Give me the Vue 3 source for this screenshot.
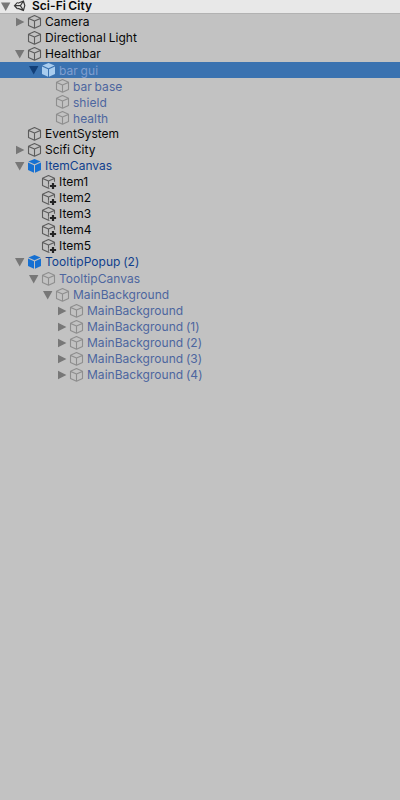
<script setup>
const rows = [
  { label: 'Camera', depth: 1, arrow: 'right' },
  { label: 'Directional Light', depth: 1 },
  { label: 'Healthbar', depth: 1, arrow: 'down' },
  { label: 'bar gui', depth: 2, arrow: 'down', kind: 'selected' },
  { label: 'bar base', depth: 3, kind: 'muted', low: true },
  { label: 'shield', depth: 3, kind: 'muted', low: true },
  { label: 'health', depth: 3, kind: 'muted', low: true },
  { label: 'EventSystem', depth: 1 },
  { label: 'Scifi City', depth: 1, arrow: 'right' },
  { label: 'ItemCanvas', depth: 1, arrow: 'down', kind: 'prefab' },
  { label: 'Item1', depth: 2, added: true },
  { label: 'Item2', depth: 2, added: true },
  { label: 'Item3', depth: 2, added: true },
  { label: 'Item4', depth: 2, added: true },
  { label: 'Item5', depth: 2, added: true },
  { label: 'TooltipPopup (2)', depth: 1, arrow: 'down', kind: 'prefab' },
  { label: 'TooltipCanvas', depth: 2, arrow: 'down', kind: 'muted', gap: true },
  { label: 'MainBackground', depth: 3, arrow: 'down', kind: 'muted' },
  { label: 'MainBackground', depth: 4, arrow: 'right', kind: 'muted' },
  { label: 'MainBackground (1)', depth: 4, arrow: 'right', kind: 'muted' },
  { label: 'MainBackground (2)', depth: 4, arrow: 'right', kind: 'muted' },
  { label: 'MainBackground (3)', depth: 4, arrow: 'right', kind: 'muted' },
  { label: 'MainBackground (4)', depth: 4, arrow: 'right', kind: 'muted' },
]
const solid = (row) => row.kind === 'prefab' || row.kind === 'selected'
</script>

<template>
  <main class="hierarchy">
    <header class="scene">
      <svg class="arrow" viewBox="0 0 12 13"><path d="M1 2.6H10.4L5.7 11Z" /></svg>
      <svg class="logo" viewBox="0 0 14 13">
        <path d="M5 3.2 10.4 1 11.8 5.6 10.4 10.4 5 8.4M4.6 2.4 1.5 5.7 4.6 9M1.6 5.7H7.4M7.4 5.7 10.2 1.3M7.4 5.7 10.2 10.1" />
      </svg>
      <span class="label">Sci-Fi City</span>
    </header>
    <ul class="tree">
      <li
        v-for="(row, i) in rows"
        :key="i"
        class="row"
        :class="[row.kind, 'depth-' + row.depth, { gap: row.gap, low: row.low }]"
      >
        <svg class="arrow" viewBox="0 0 12 16">
          <path v-if="row.arrow === 'down'" d="M1 4H10.4L5.7 12.4Z" />
          <path v-else-if="row.arrow === 'right'" d="M2 3.8V12.2L10.4 8Z" />
        </svg>
        <svg class="cube" viewBox="0 0 16 16">
          <template v-if="solid(row)">
            <path class="face" d="M7.5 1.1 13.6 3.5 7.5 6.2 1.4 3.5Z" />
            <path class="face" d="M1 4.6 7 7.2V14.7L1 11.9Z" />
            <path class="face" d="M14 4.6 8 7.2V14.7L14 11.9Z" />
          </template>
          <path v-else class="wire" d="M7.5 1.6 13.5 4.3V11.4L7.5 14.3 1.5 11.4V4.3ZM1.7 4.4 7.5 7.1 13.3 4.4M7.5 7.1V14" />
          <template v-if="row.added">
            <path class="halo" d="M12 7.8V16M7.8 12H16" />
            <path class="plus" d="M12 8.9V15.1M8.9 12H15.1" />
          </template>
        </svg>
        <span class="label">{{ row.label }}</span>
      </li>
    </ul>
  </main>
</template>

<style>
body {
  background: #c2c2c2;
}
</style>

<style scoped>
.hierarchy {
  min-height: 800px;
  background: #c2c2c2;
  color: #080808;
  font: 12px/16px Inter, sans-serif;
  letter-spacing: 0.03px;
  word-spacing: -0.6px;
  overflow: hidden;
}
.scene {
  box-sizing: border-box;
  height: 14px;
  display: flex;
  align-items: flex-start;
  background: #e8e8e8;
  border-bottom: 1px solid #b2b2b2;
  font-weight: 600;
  line-height: 12px;
}
.scene .arrow {
  height: 13px;
  margin-right: 1px;
}
.logo {
  width: 14px;
  height: 13px;
  margin-right: 5px;
  flex: none;
  fill: none;
  stroke: #383838;
  stroke-width: 1.2;
}
.tree {
  list-style: none;
  margin: 0;
  padding: 0;
}
.row {
  height: 16px;
  display: flex;
  align-items: center;
  white-space: pre;
}
.gap {
  margin-top: 1px;
}
.low .label {
  padding-top: 2px;
}
.depth-1 { padding-left: 14px; }
.depth-2 { padding-left: 28px; }
.depth-3 { padding-left: 42px; }
.depth-4 { padding-left: 56px; }
.arrow {
  width: 12px;
  height: 16px;
  flex: none;
  fill: #777;
}
.cube {
  width: 16px;
  height: 16px;
  margin: 0 2px 0 1px;
  flex: none;
}
.wire {
  fill: none;
  stroke: #5c5c5c;
  stroke-width: 1.1;
  stroke-linejoin: round;
}
.face {
  fill: #1670d2;
}
.halo {
  stroke: #c2c2c2;
  stroke-width: 4;
}
.plus {
  stroke: #252525;
  stroke-width: 2.2;
}
.prefab {
  color: #103f8d;
}
.muted {
  color: #4d669f;
}
.muted .wire {
  stroke: #8e8e8e;
}
.selected {
  background: #3a72b0;
  color: #809fd0;
}
.selected .label {
  padding-top: 2px;
}
.selected .arrow {
  fill: #123f78;
}
.selected .face {
  fill: #a9cdef;
}
</style>
